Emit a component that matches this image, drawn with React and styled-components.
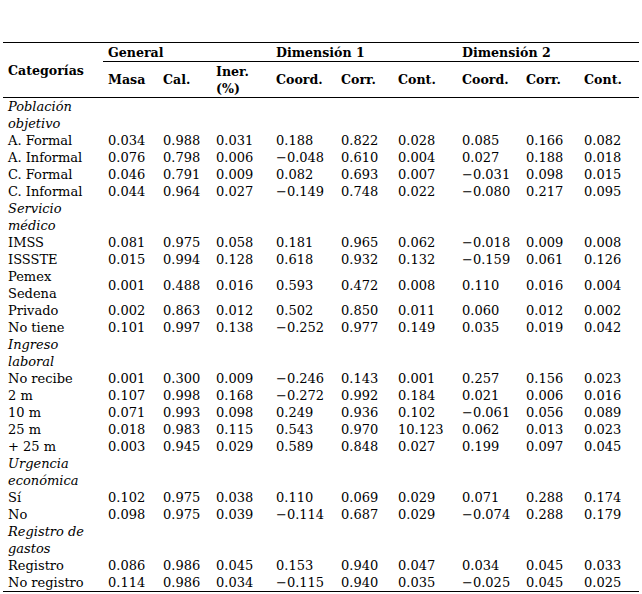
import React from "react";
import styled, { createGlobalStyle } from "styled-components";

const GlobalStyle = createGlobalStyle`
  html, body {
    margin: 0;
    padding: 0;
    background: #ffffff;
  }
`;

const widths = [100, 55, 53, 60, 65, 57, 64, 64, 58, 60];

// filas: [etiqueta, valores...]
const groups = [
  {
    title: "Población objetivo",
    rows: [
      ["A. Formal", "0.034", "0.988", "0.031", "0.188", "0.822", "0.028", "0.085", "0.166", "0.082"],
      ["A. Informal", "0.076", "0.798", "0.006", "−0.048", "0.610", "0.004", "0.027", "0.188", "0.018"],
      ["C. Formal", "0.046", "0.791", "0.009", "0.082", "0.693", "0.007", "−0.031", "0.098", "0.015"],
      ["C. Informal", "0.044", "0.964", "0.027", "−0.149", "0.748", "0.022", "−0.080", "0.217", "0.095"],
    ],
  },
  {
    title: "Servicio médico",
    rows: [
      ["IMSS", "0.081", "0.975", "0.058", "0.181", "0.965", "0.062", "−0.018", "0.009", "0.008"],
      ["ISSSTE", "0.015", "0.994", "0.128", "0.618", "0.932", "0.132", "−0.159", "0.061", "0.126"],
      ["Pemex Sedena", "0.001", "0.488", "0.016", "0.593", "0.472", "0.008", "0.110", "0.016", "0.004"],
      ["Privado", "0.002", "0.863", "0.012", "0.502", "0.850", "0.011", "0.060", "0.012", "0.002"],
      ["No tiene", "0.101", "0.997", "0.138", "−0.252", "0.977", "0.149", "0.035", "0.019", "0.042"],
    ],
  },
  {
    title: "Ingreso laboral",
    rows: [
      ["No recibe", "0.001", "0.300", "0.009", "−0.246", "0.143", "0.001", "0.257", "0.156", "0.023"],
      ["2 m", "0.107", "0.998", "0.168", "−0.272", "0.992", "0.184", "0.021", "0.006", "0.016"],
      ["10 m", "0.071", "0.993", "0.098", "0.249", "0.936", "0.102", "−0.061", "0.056", "0.089"],
      ["25 m", "0.018", "0.983", "0.115", "0.543", "0.970", "10.123", "0.062", "0.013", "0.023"],
      ["+ 25 m", "0.003", "0.945", "0.029", "0.589", "0.848", "0.027", "0.199", "0.097", "0.045"],
    ],
  },
  {
    title: "Urgencia económica",
    rows: [
      ["Sí", "0.102", "0.975", "0.038", "0.110", "0.069", "0.029", "0.071", "0.288", "0.174"],
      ["No", "0.098", "0.975", "0.039", "−0.114", "0.687", "0.029", "−0.074", "0.288", "0.179"],
    ],
  },
  {
    title: "Registro de gastos",
    rows: [
      ["Registro", "0.086", "0.986", "0.045", "0.153", "0.940", "0.047", "0.034", "0.045", "0.033"],
      ["No registro", "0.114", "0.986", "0.034", "−0.115", "0.940", "0.035", "−0.025", "0.045", "0.025"],
    ],
  },
];

const App = () => {
  return (
    <>
      <GlobalStyle />
      <Page>
        <Table>
          <colgroup>
            {widths.map((w, i) => (
              <col key={i} style={{ width: w }} />
            ))}
          </colgroup>
          <thead>
            <GroupRow>
              <HeadCell rowSpan={2}>Categorías</HeadCell>
              <GroupCell colSpan={3}>General</GroupCell>
              <GroupCell colSpan={3}>Dimensión 1</GroupCell>
              <GroupCell colSpan={3}>Dimensión 2</GroupCell>
            </GroupRow>
            <SubRow>
              <HeadCell>Masa</HeadCell>
              <HeadCell>Cal.</HeadCell>
              <HeadCell>
                Iner.
                <br />
                (%)
              </HeadCell>
              <HeadCell>Coord.</HeadCell>
              <HeadCell>Corr.</HeadCell>
              <HeadCell>Cont.</HeadCell>
              <HeadCell>Coord.</HeadCell>
              <HeadCell>Corr.</HeadCell>
              <HeadCell>Cont.</HeadCell>
            </SubRow>
          </thead>
          <tbody>
            {groups.map((g) => (
              <React.Fragment key={g.title}>
                <tr>
                  <GroupLabel>{g.title}</GroupLabel>
                  <td colSpan={9} />
                </tr>
                {g.rows.map((r) => (
                  <tr key={r[0]}>
                    {r.map((v, i) => (
                      <Cell key={i}>{v}</Cell>
                    ))}
                  </tr>
                ))}
              </React.Fragment>
            ))}
          </tbody>
        </Table>
      </Page>
    </>
  );
};

const Page = styled.div`
  padding: 42px 3px 0 3px;
  width: 636px;
`;

const Table = styled.table`
  width: 636px;
  table-layout: fixed;
  border-collapse: collapse;
  font-family: "DejaVu Serif", "Liberation Serif", serif;
  font-size: 13px;
  line-height: 17px;
  color: #000;
  border-top: 1px solid #000;
  border-bottom: 1px solid #000;
`;

const GroupRow = styled.tr`
  height: 19px;
`;

const SubRow = styled.tr`
  height: 36px;
  border-bottom: 1px solid #000;
`;

const HeadCell = styled.th`
  font-weight: bold;
  font-size: 12.6px;
  text-align: left;
  vertical-align: middle;
  padding: 0 0 0 5px;
  white-space: nowrap;
`;

const GroupCell = styled(HeadCell)`
  border-bottom: 1px solid #000;
  vertical-align: top;
  padding-top: 1px;
`;

const Cell = styled.td`
  padding: 0 0 0 5px;
  vertical-align: middle;
  text-align: left;
  white-space: nowrap;
  &:first-child {
    white-space: normal;
    padding-right: 4px;
  }
`;

const GroupLabel = styled.td`
  font-style: italic;
  padding: 0 4px 0 5px;
`;

export default App;
